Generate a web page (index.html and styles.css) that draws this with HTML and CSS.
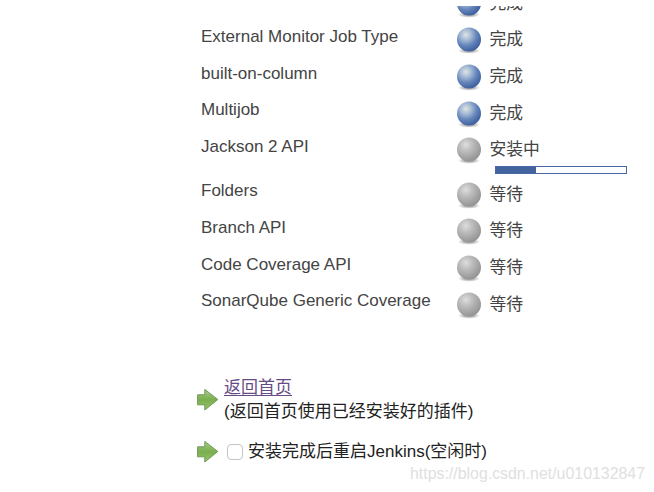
FILE: index.html
```
<!DOCTYPE html>
<html lang="zh-CN">
<head>
  <meta charset="UTF-8">
  <title>Jenkins</title>
  <link rel="stylesheet" href="styles.css">
</head>
<body>
  <svg class="defs" width="0" height="0">
    <defs>
      <radialGradient id="blue" cx="0.37" cy="0.3" r="0.7">
        <stop offset="0" stop-color="#dfe5e3"/>
        <stop offset="0.3" stop-color="#a9bdd6"/>
        <stop offset="0.65" stop-color="#6485ba"/>
        <stop offset="1" stop-color="#3f60a0"/>
      </radialGradient>
      <radialGradient id="grey" cx="0.37" cy="0.3" r="0.7">
        <stop offset="0" stop-color="#dedede"/>
        <stop offset="0.4" stop-color="#bcbcbc"/>
        <stop offset="1" stop-color="#949494"/>
      </radialGradient>
      <radialGradient id="shadow">
        <stop offset="0.4" stop-color="#777" stop-opacity="0.6"/>
        <stop offset="1" stop-color="#777" stop-opacity="0"/>
      </radialGradient>
      <linearGradient id="green" x1="0" y1="0" x2="0" y2="1">
        <stop offset="0" stop-color="#a9cc85"/>
        <stop offset="0.5" stop-color="#7bae50"/>
        <stop offset="1" stop-color="#94c666"/>
      </linearGradient>
      <symbol id="ball-blue" viewBox="0 0 26 28">
        <ellipse cx="13" cy="24.6" rx="11" ry="3.2" fill="url(#shadow)"/>
        <circle cx="13" cy="13.6" r="12" fill="url(#blue)"/>
      </symbol>
      <symbol id="ball-grey" viewBox="0 0 26 28">
        <ellipse cx="13" cy="24.6" rx="11" ry="3.2" fill="url(#shadow)"/>
        <circle cx="13" cy="13.6" r="12" fill="url(#grey)"/>
      </symbol>
      <symbol id="arrow" viewBox="0 0 24 24">
        <path d="M1.6 6.8h7.2V1.4L21.8 11.5 8.8 22v-5.2H1.6z" fill="url(#green)" stroke="#71985b" stroke-width="1" stroke-linejoin="round"/>
      </symbol>
    </defs>
  </svg>

  <div class="log">
    <div class="row">
      <div class="name"></div>
      <div class="status"><svg class="ball"><use href="#ball-blue"/></svg><span>完成</span></div>
    </div>
    <div class="row">
      <div class="name">External Monitor Job Type</div>
      <div class="status"><svg class="ball"><use href="#ball-blue"/></svg><span>完成</span></div>
    </div>
    <div class="row">
      <div class="name">built-on-column</div>
      <div class="status"><svg class="ball"><use href="#ball-blue"/></svg><span>完成</span></div>
    </div>
    <div class="row">
      <div class="name">Multijob</div>
      <div class="status"><svg class="ball"><use href="#ball-blue"/></svg><span>完成</span></div>
    </div>
    <div class="row installing">
      <div class="name">Jackson 2 API</div>
      <div>
        <div class="status"><svg class="ball"><use href="#ball-grey"/></svg><span>安装中</span></div>
        <div class="progress"><div class="progress-done" style="width: 31%"></div></div>
      </div>
    </div>
    <div class="row">
      <div class="name">Folders</div>
      <div class="status"><svg class="ball"><use href="#ball-grey"/></svg><span>等待</span></div>
    </div>
    <div class="row">
      <div class="name">Branch API</div>
      <div class="status"><svg class="ball"><use href="#ball-grey"/></svg><span>等待</span></div>
    </div>
    <div class="row">
      <div class="name">Code Coverage API</div>
      <div class="status"><svg class="ball"><use href="#ball-grey"/></svg><span>等待</span></div>
    </div>
    <div class="row">
      <div class="name">SonarQube Generic Coverage</div>
      <div class="status"><svg class="ball"><use href="#ball-grey"/></svg><span>等待</span></div>
    </div>
  </div>

  <div class="actions">
    <div class="action">
      <svg class="arrow"><use href="#arrow"/></svg>
      <div class="action-text">
        <a class="home-link" href="#">返回首页</a>
        <div>(返回首页使用已经安装好的插件)</div>
      </div>
    </div>
    <label class="action restart">
      <svg class="arrow"><use href="#arrow"/></svg>
      <input class="checkbox" type="checkbox">
      <span>安装完成后重启Jenkins(空闲时)</span>
    </label>
  </div>
  <div class="watermark">https://blog.csdn.net/u010132847</div>
</body>
</html>
```
FILE: styles.css
```
body {
  margin: 0;
  height: 492px;
  overflow: hidden;
  background-color: #fff;
  color: #444;
  font-family: "Liberation Sans", "Noto Sans CJK SC", sans-serif;
  font-size: 17px;
  line-height: 24px;
}
.defs {
  position: absolute;
}
/* the list is scrolled, so its first row is cut at the top */
.log {
  display: flex;
  flex-direction: column;
  justify-content: flex-end;
  height: 317px;
  margin-top: 6px;
  padding-left: 201px;
  overflow: hidden;
}
.row {
  display: grid;
  flex: none;
  grid-template-columns: 255px 1fr;
  height: 36.7px;
}
.row.installing {
  height: 44.2px;
}
.name {
  padding-top: 3px;
  white-space: nowrap;
}
.status {
  display: flex;
  align-items: center;
  gap: 7.5px;
  height: 36.7px;
  font-size: 16.8px;
}
.ball {
  width: 26px;
  height: 28px;
}
.progress {
  width: 130px;
  height: 6px;
  margin: -3px 0 0 39px;
  border: 1px solid #4868a5;
}
.progress-done {
  height: 100%;
  background-color: #4464a0;
}
.actions {
  padding: 53px 0 0 196px;
  color: #222;
}
.action {
  display: flex;
  align-items: center;
}
.action-text {
  margin-left: 4px;
}
.home-link {
  display: block;
  color: #674b85;
  text-underline-offset: 2px;
}
.arrow {
  width: 24px;
  height: 24px;
}
.restart {
  margin-top: 16px;
}
.checkbox {
  appearance: none;
  width: 16px;
  height: 16px;
  margin: 0 5px 0 7px;
  border: 1px solid #c4c4c4;
  border-radius: 4px;
  background-color: #fff;
}
.watermark {
  margin: -2px 9px 0 0;
  color: #e0e0e0;
  font-size: 15.9px;
  text-align: right;
}
```
